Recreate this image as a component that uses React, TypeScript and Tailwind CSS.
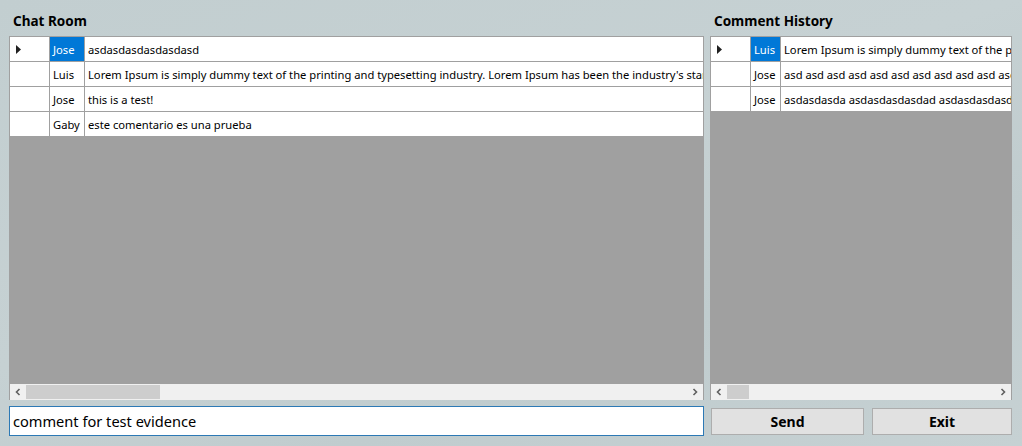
import React from 'react';

type Row = { name: string; text: string };

const chatRows: Row[] = [
  { name: 'Jose', text: 'asdasdasdasdasdasd' },
  { name: 'Luis', text: "Lorem Ipsum is simply dummy text of the printing and typesetting industry. Lorem Ipsum has been the industry's standard dummy text ever since the 1500s" },
  { name: 'Jose', text: 'this is a test!' },
  { name: 'Gaby', text: 'este comentario es una prueba' },
];

const historyRows: Row[] = [
  { name: 'Luis', text: "Lorem Ipsum is simply dummy text of the printing and typesetting industry." },
  { name: 'Jose', text: 'asd asd asd asd asd asd asd asd asd asd asd asd asd' },
  { name: 'Jose', text: 'asdasdasda asdasdasdasdad asdasdasdasd' },
];

const font = { fontFamily: '"Noto Sans", "Open Sans", sans-serif' };

const Chevron = ({ dir }: { dir: 'left' | 'right' }) => (
  <svg width="8" height="8" viewBox="0 0 8 8" className="text-[#606060]">
    {dir === 'left' ? (
      <path d="M5.5 1 L2.5 4 L5.5 7" fill="none" stroke="currentColor" strokeWidth="1.6" />
    ) : (
      <path d="M2.5 1 L5.5 4 L2.5 7" fill="none" stroke="currentColor" strokeWidth="1.6" />
    )}
  </svg>
);

const Grid = ({ rows, nameW, thumbW }: { rows: Row[]; nameW: string; thumbW: string }) => (
  <div className="flex-1 flex flex-col border border-b-0 border-[#a0a0a0] bg-[#a0a0a0] min-h-0">
    <div className="flex-1 flex flex-col">
      {rows.map((r, i) => (
        <div key={i} className="flex h-[25px] bg-white border-b border-[#a0a0a0] text-[11.2px] leading-[25px] text-black">
          <div className="w-[40px] shrink-0 border-r border-[#a0a0a0] flex items-center pl-[6px]">
            {i === 0 && (
              <svg width="5" height="9" viewBox="0 0 5 9">
                <path d="M0 0 L5 4.5 L0 9 Z" fill="#202020" />
              </svg>
            )}
          </div>
          <div className={`${nameW} shrink-0 border-r border-[#a0a0a0] px-[3px] ${i === 0 ? 'bg-[#0078d7] text-white' : ''}`}>
            {r.name}
          </div>
          <div className="flex-1 min-w-0 overflow-hidden whitespace-nowrap px-[3px]">{r.text}</div>
        </div>
      ))}
    </div>
    <div className="h-[16px] bg-[#f0f0f0] flex items-center">
      <div className="w-[16px] h-full flex items-center justify-center">
        <Chevron dir="left" />
      </div>
      <div className={`${thumbW} h-[14px] bg-[#cdcdcd]`} />
      <div className="flex-1" />
      <div className="w-[16px] h-full flex items-center justify-center">
        <Chevron dir="right" />
      </div>
    </div>
  </div>
);

export default function App() {
  return (
    <div
      className="w-[1022px] h-[446px] overflow-hidden flex flex-col bg-[linear-gradient(160deg,#c2ced0_0%,#c6d1d3_45%,#c0ccce_70%,#c6d1d3_100%)]"
      style={font}
    >
      <div className="h-[400px] flex">
        <div className="ml-[9px] w-[695px] flex flex-col">
          <div className="h-[36px] pt-[11px] pl-[4px] text-[13.5px] font-bold leading-[20px] text-black">Chat Room</div>
          <Grid rows={chatRows} nameW="w-[35px]" thumbW="w-[134px]" />
        </div>
        <div className="ml-[6px] w-[302px] flex flex-col">
          <div className="h-[36px] pt-[11px] pl-[4px] text-[13.5px] font-bold leading-[20px] text-black">Comment History</div>
          <Grid rows={historyRows} nameW="w-[30px]" thumbW="w-[22px]" />
        </div>
      </div>
      <div className="mt-[6px] h-[30px] flex items-start">
        <input
          readOnly
          value="comment for test evidence"
          className="ml-[9px] w-[695px] h-[30px] border border-[#2c79b5] bg-white px-[3px] text-[14.6px] text-black outline-none"
          style={font}
        />
        <button className="ml-[7px] mt-[2px] w-[153px] h-[27px] border border-[#adadad] bg-[#e1e1e1] text-[14px] font-bold text-black">
          Send
        </button>
        <button className="ml-[8px] mt-[2px] w-[140px] h-[27px] border border-[#adadad] bg-[#e1e1e1] text-[14px] font-bold text-black">
          Exit
        </button>
      </div>
    </div>
  );
}
